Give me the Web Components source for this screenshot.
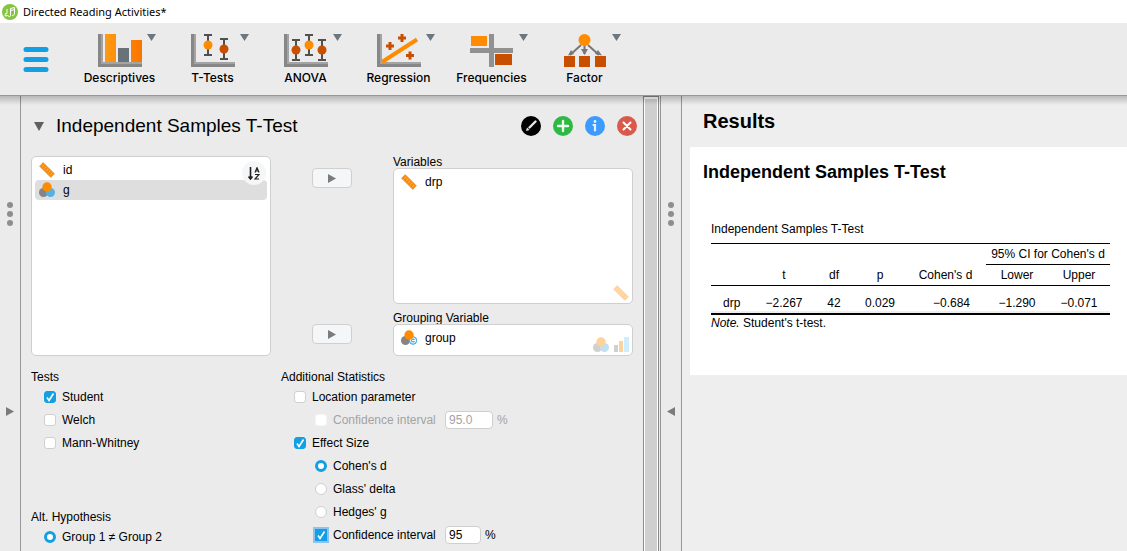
<!DOCTYPE html>
<html lang="en">
<head>
<meta charset="utf-8">
<title>Directed Reading Activities*</title>
<style>
html, body { margin: 0; height: 100%; }
body { font-family: "Liberation Sans", Arial, sans-serif; font-size: 12px; color: #000; background: #ebebeb; }
</style>
</head>
<body>
<stats-app></stats-app>
<script>
const define = (name, html, setup) => customElements.define(name, class extends HTMLElement {
  connectedCallback() {
    if (this.shadowRoot) return;
    this.attachShadow({ mode: 'open' }).innerHTML = typeof html === 'function' ? html(this) : html;
    if (setup) setup(this, this.shadowRoot);
  }
});

const axes = '<path d="M0 0h5v33h-5z" fill="#878787"/><path d="M0 28h44v5H0z" fill="#878787"/><path d="M3 0h2v28h39v2H3z" fill="#a4a4a4"/>';
const bar = (x, y, r, c) => `<path d="M${x - 4} ${y - 10}h8M${x} ${y - 10}v20M${x - 4} ${y + 10}h8" stroke="#505050" stroke-width="2" fill="none"/><circle cx="${x}" cy="${y}" r="${r}" fill="${c}"/>`;
const nominal = extra => `<circle cx="4.5" cy="10.5" r="4.5" fill="#858585"/>${extra}<circle cx="8" cy="5" r="4.7" fill="#ff8c00"/>`;

const ICONS = {
  logo: ['0 0 16 16', '<circle cx="8" cy="8" r="8" fill="#85c441"/><path d="M12.5 3.5l-4 1v7q-.3 1.700-2.200 1.200M12.500 3.500v6.800M5 5v4.500h-1.500l-.5 2.500 3.500-.5M8.500 6.500l4-1M10 12l2.500-1.700" stroke="#fff" fill="none" stroke-width="1"/>'],
  menu: ['0 0 26 26', '<path d="M3 2.500h20M3 12.500h20M3 22.500h20" stroke="#139fe4" stroke-width="5" stroke-linecap="round"/>'],
  descriptives: ['0 0 44 33', axes + '<defs><linearGradient id="g" x2="1"><stop stop-color="#ff9a12"/><stop offset="1" stop-color="#fb7500"/></linearGradient></defs><path d="M7 0h11v28H7zM33 6h11v22H33z" fill="url(#g)"/><path d="M20 14h11v14H20z" fill="#697279"/>'],
  ttests: ['0 0 44 33', axes + bar(17, 11, 4.5, '#ff8c00') + bar(33, 15, 4.5, '#c94f00')],
  anova: ['0 0 44 33', axes + bar(12, 16, 4.5, '#c94f00') + bar(25, 11, 4.5, '#ff8c00') + bar(38, 16, 4.5, '#c94f00')],
  regression: ['0 0 44 33', axes + '<path d="M5 28L40 5.500" stroke="#ff8c00" stroke-width="4"/><path d="M9 12h8M13 8v8M21 4h8M25 0v8M29 21.500h8M33 17.500v8" stroke="#c94f00" stroke-width="3"/>'],
  frequencies: ['0 0 44 33', '<path d="M19 0h5v33h-5zM0 14h43v5H0z" fill="#919191"/><path d="M1 2h16v10H1z" fill="#ff8c00"/><path d="M25 20h17v11H25z" fill="#c94f00"/>'],
  factor: ['0 0 44 33', '<path d="M18 11L7 21M21.500 11v9M25 11l11 10" stroke="#777" stroke-width="2"/><path d="M5 21.500l3-5.500 3 4zM18 15l3.500 6 3.500-6zM32 20l3-4 4 5.500z" fill="#777"/><circle cx="21.500" cy="6" r="6" fill="#ff8c00"/><path d="M1 22h11v11H1zM16 22h11v11H16zM32 22h11v11H32z" fill="#c94f00"/>'],
  scale: ['0 0 16 16', '<path d="M.5 4L4 .5 15.500 12 12 15.500z" fill="#ff8c00"/><path d="M4 .5L15.500 12M.5 4L12 15.500" stroke="#dc9140" fill="none"/><path d="M5 3L3.500 4.500M7 5L5.500 6.500M9 7L7.500 8.500M11 9l-1.500 1.500M13 11l-1.500 1.500" stroke="#ffb76a" fill="none"/>'],
  nominal: ['0 0 16 16', nominal('<circle cx="11.500" cy="10.500" r="4.500" fill="#56b1e0"/>')],
  nominaltext: ['0 0 16 16', nominal('<circle cx="12" cy="10.500" r="4.200" fill="#49aee4"/><circle cx="12" cy="10.500" r="2.600" fill="none" stroke="#fff"/><path d="M11 10.500h4" stroke="#fff"/>')],
  ordinal: ['0 0 16 16', '<path d="M1 8h4v7H1z" fill="#858585"/><path d="M6 4h4v11H6z" fill="#ff8c00"/><path d="M11 0h5v15h-5z" fill="#7cd6ff"/>'],
  edit: ['0 0 20 20', '<circle cx="10" cy="10" r="10" fill="#000"/><path d="M8.500 11.500l6-6" stroke="#e8e8e8" stroke-width="2.400" stroke-linecap="round"/><path d="M5 15l1-3.500 2.500 2.500z" fill="#e8e8e8"/>'],
  add: ['0 0 20 20', '<circle cx="10" cy="10" r="10" fill="#2eb944"/><path d="M5 10h10M10 5v10" stroke="#efe" stroke-width="2.400" stroke-linecap="round"/>'],
  info: ['0 0 20 20', '<circle cx="10" cy="10" r="10" fill="#3d9bff"/><circle cx="10" cy="5.500" r="1.400" fill="#e4f1ff"/><path d="M8.500 9h1.500v5.500" stroke="#e4f1ff" stroke-width="2.200" fill="none" stroke-linecap="round"/>'],
  close: ['0 0 20 20', '<circle cx="10" cy="10" r="10" fill="#d95a4a"/><path d="M6.500 6.500l7 7M13.500 6.500l-7 7" stroke="#fff" stroke-width="2" stroke-linecap="round"/>'],
  right: ['0 0 8 9', '<path d="M0 0l8 4.500L0 9z" fill="#7b7b7b"/>'],
  left: ['0 0 8 9', '<path d="M8 0L0 4.500 8 9z" fill="#7b7b7b"/>'],
  down: ['0 0 10 9', '<path d="M0 0h10L5 9z" fill="#606060"/>'],
  drop: ['0 0 9 7', '<path d="M0 0h9L4.500 7z" fill="#6b7880"/>'],
  grip: ['0 0 6 24', '<g fill="#8e8e8e"><circle cx="3" cy="3" r="3"/><circle cx="3" cy="12" r="3"/><circle cx="3" cy="21" r="3"/></g>'],
  sort: ['0 0 12 13', '<path d="M2.500 0v12M.5 9.500l2 2.500 2-2.500" stroke="#222" stroke-width="1.600" fill="none"/><path d="M7 5.500L9 .7l2 4.800M7.500 4h3M7 7.500h4L7 12h4" stroke="#222" stroke-width="1.200" fill="none"/>']
};

define('app-icon', el => {
  const [box, body] = ICONS[el.getAttribute('name')];
  const [, , w, h] = box.split(' ');
  return `<style>:host{display:block;flex:none;line-height:0}svg{display:block}</style>
  <svg width="${w}" height="${h}" viewBox="${box}" aria-hidden="true">${body}</svg>`;
});

define('title-bar', `<style>
:host{display:flex;align-items:center;gap:5px;height:23px;padding-left:2px;background:#fff;font:11px "Noto Sans","Open Sans",sans-serif}
</style><app-icon name="logo"></app-icon><span><slot></slot></span>`);

define('tool-item', el => `<style>
:host{display:block;width:93px}
button{all:unset;box-sizing:border-box;position:relative;display:flex;flex-direction:column;align-items:center;gap:2px;width:100%;padding-top:11px;font:500 12px/18px Inter,sans-serif;cursor:pointer}
.drop{position:absolute;left:74px;top:11px}
</style><button><app-icon name="${el.getAttribute('icon')}"></app-icon><span><slot></slot></span><app-icon class="drop" name="drop"></app-icon></button>`);

define('tool-bar', `<style>
:host{display:flex;align-items:flex-start;height:72px;background:#ebebeb;border-bottom:1px solid #979797}
.menu{all:unset;padding:24px 24px 0 23px;cursor:pointer}
</style>
<button class="menu" aria-label="Menu"><app-icon name="menu"></app-icon></button>
<slot></slot>`);

define('pane-handle', el => `<style>
:host{display:grid;grid-template-rows:1fr;flex:0 0 20px;border-right:1px solid #979797;background:#ebebeb}
div{display:flex;flex-direction:column;align-items:center;padding-top:106px;gap:181px}
button{all:unset;cursor:pointer}
</style><div><app-icon name="grip"></app-icon><button aria-label="Toggle panel"><app-icon name="${el.getAttribute('arrow')}"></app-icon></button></div>`);

define('var-item', el => `<style>
:host{display:flex;align-items:center;gap:8px;height:20px;padding-left:4px;border-radius:4px}
:host([selected]){background:#dedede}
</style><app-icon name="${el.getAttribute('icon')}"></app-icon><span><slot></slot></span>`);

define('var-list', `<style>
:host{display:block;position:relative;box-sizing:border-box;padding:3px;background:#fff;border:1px solid #cfcfcf;border-radius:5px}
.types{position:absolute;right:3px;bottom:2px;display:flex;gap:4px;opacity:.38}
.corner{position:absolute;right:4px;top:4px}
</style><slot></slot><div class="types"><slot name="types"></slot></div><div class="corner"><slot name="corner"></slot></div>`);

define('move-button', `<style>
:host{display:block}
button{display:flex;align-items:center;justify-content:center;box-sizing:border-box;width:100%;height:20px;padding:0;background:#f5f6f7;border:1px solid #cfcfcf;border-radius:4px}
</style><button aria-label="Move variable"><app-icon name="right"></app-icon></button>`);

define('sort-button', `<style>
:host{display:block}
button{display:flex;align-items:center;justify-content:center;width:24px;height:24px;padding:0;border:0;border-radius:50%;background:#f5f6f7}
</style><button aria-label="Sort variables"><app-icon name="sort"></app-icon></button>`);

define('form-option', el => {
  const has = a => el.hasAttribute(a) ? a : '';
  return `<style>
:host{display:flex;align-items:center;height:23px;padding-left:13px}
:host([nested]){padding-left:34px}
:host([disabled]){color:#a3a3a3}
label{display:flex;align-items:center;gap:6px}
:host([value]) label.opt{width:130px}
input{box-sizing:border-box;margin:0;font:inherit;color:inherit}
.mark{appearance:none;width:12px;height:12px;background:#fff;border:1px solid #cfcfcf;border-radius:3px}
.mark[type=radio]{border-radius:50%}
.mark:disabled{border-color:#f5f5f5}
.mark[type=checkbox]:checked{border-color:#139fe4;background:#139fe4 url("data:image/svg+xml,%3Csvg xmlns='http://www.w3.org/2000/svg' viewBox='0 0 10 10'%3E%3Cpath d='M2 5.500l2 3L8.500 1.500' fill='none' stroke='white' stroke-width='1.600'/%3E%3C/svg%3E")}
.mark[type=radio]:checked{border:3px solid #139fe4}
:host([focused]) .mark{box-shadow:0 0 0 2px #8fc1f3;border-radius:0}
.num{width:36px;height:18px;padding:0 3px;background:#fff;border:1px solid #cfcfcf;border-radius:4px}
:host([wide]) .num{width:48px}
.amount{gap:4px}
</style>
<label class="opt"><input class="mark" type="${el.getAttribute('type')}" ${has('checked')} ${has('disabled')}><span><slot></slot></span></label>
${has('value') ? `<label class="amount"><input class="num" aria-label="Confidence level" value="${el.getAttribute('value')}" ${has('disabled')}><span>%</span></label>` : ''}`;
}, (el, root) => {
  root.querySelector('.mark').addEventListener('change', e => {
    if (e.target.type !== 'radio') return;
    for (const other of el.parentElement.querySelectorAll('form-option[type=radio]'))
      if (other !== el) other.shadowRoot.querySelector('.mark').checked = false;
  });
});

define('option-group', el => `<style>
:host{display:block}
h3{margin:0;font-size:12px;font-weight:400;line-height:16px}
</style><h3>${el.getAttribute('heading')}</h3><slot></slot>`);

define('analysis-form', `<style>
:host{display:block;flex:0 1 622px;box-sizing:border-box;padding:20px 10px 0;overflow:hidden}
header{display:flex;align-items:center;gap:12px;height:20px;margin-right:-4px;padding-left:3px}
h2{flex:1;margin:0;font-size:19px;line-height:20px;font-weight:400}
header button{all:unset;cursor:pointer}
.vars{display:grid;grid-template-columns:1fr 40px 1fr;grid-template-rows:12px 136px 8px 12px 32px;column-gap:41px;margin:20px 0 13px}
.source{grid-area:1/1/6/2}
.m1{grid-area:2/2}.m2{grid-area:5/2}
.l1{grid-area:1/3}.l2{grid-area:4/3}
.v1{grid-area:2/3}.v2{grid-area:5/3}
.l1,.l2{line-height:12px}
.options{display:grid;grid-template-columns:250px 1fr}
.left{display:grid;align-content:start;gap:55px}
</style>
<header><button aria-label="Collapse"><app-icon name="down"></app-icon></button><h2>Independent Samples T-Test</h2>
<button aria-label="Rename"><app-icon name="edit"></app-icon></button><button aria-label="Duplicate"><app-icon name="add"></app-icon></button><button aria-label="Help"><app-icon name="info"></app-icon></button><button aria-label="Remove"><app-icon name="close"></app-icon></button></header>
<div class="vars">
<var-list class="source"><var-item icon="scale">id</var-item><var-item icon="nominal" selected>g</var-item><sort-button slot="corner"></sort-button></var-list>
<move-button class="m1"></move-button><move-button class="m2"></move-button>
<span class="l1">Variables</span>
<var-list class="v1"><var-item icon="scale">drp</var-item><app-icon slot="types" name="scale"></app-icon></var-list>
<span class="l2">Grouping Variable</span>
<var-list class="v2"><var-item icon="nominaltext">group</var-item><app-icon slot="types" name="nominal"></app-icon><app-icon slot="types" name="ordinal"></app-icon></var-list>
</div>
<div class="options">
<div class="left">
<option-group heading="Tests"><form-option type="checkbox" checked>Student</form-option><form-option type="checkbox">Welch</form-option><form-option type="checkbox">Mann-Whitney</form-option></option-group>
<option-group heading="Alt. Hypothesis"><form-option type="radio" checked>Group 1 ≠ Group 2</form-option></option-group>
</div>
<option-group heading="Additional Statistics">
<form-option type="checkbox">Location parameter</form-option>
<form-option type="checkbox" nested disabled wide value="95.0">Confidence interval</form-option>
<form-option type="checkbox" checked>Effect Size</form-option>
<form-option type="radio" nested checked>Cohen's d</form-option>
<form-option type="radio" nested>Glass' delta</form-option>
<form-option type="radio" nested>Hedges' g</form-option>
<form-option type="checkbox" nested checked focused value="95">Confidence interval</form-option>
</option-group>
</div>`);

define('scroll-track', `<style>
:host{display:flex;flex:0 0 18px;box-sizing:border-box;border-right:1px solid #979797}
div{flex:1;box-sizing:border-box;margin-right:1px;border:1px solid #8a8a8a;border-bottom:0;padding:2px 1px 0;background:#fff}
i{display:block;height:100%;background:#cfcfcf}
</style><div><i></i></div>`);

define('results-panel', `<style>
:host{display:block;flex:1;min-width:0;background:#eee;padding:13px 0 0 8px}
h1{margin:0 0 14px 13px;font-size:20px;line-height:24px}
section{background:#fff;padding:13px 13px 44px}
h2{margin:0 0 38px;font-size:18px;line-height:24px}
table{width:399px;margin-left:8px;table-layout:fixed;border-collapse:separate;border-spacing:0;line-height:15px}
caption{text-align:left;padding-bottom:6px}
th,td{padding:0;font-weight:400;text-align:center}
thead th{height:20px}
.top th{border-top:1px solid #000}
.top .ci{border-bottom:1px solid #000}
.sub th{border-bottom:1px solid #000}
tbody td,tbody th{height:16px;padding-top:9px;border-bottom:2px solid #eee}
tbody th{text-align:left;padding-left:12px}
tbody .d{text-align:right;padding-right:16px}
tfoot td{border-top:2px solid #000;text-align:left;height:16px}
</style>
<h1>Results</h1>
<section><h2>Independent Samples T-Test</h2>
<table><caption>Independent Samples T-Test</caption>
<colgroup><col style="width:44px"><col style="width:58px"><col style="width:42px"><col style="width:50px"><col style="width:81px"><col style="width:62px"><col style="width:62px"></colgroup>
<thead><tr class="top"><th colspan="5"></th><th class="ci" colspan="2">95% CI for Cohen's d</th></tr>
<tr class="sub"><th></th><th>t</th><th>df</th><th>p</th><th>Cohen's d</th><th>Lower</th><th>Upper</th></tr></thead>
<tbody><tr><th>drp</th><td>−2.267</td><td>42</td><td>0.029</td><td class="d">−0.684</td><td>−1.290</td><td>−0.071</td></tr></tbody>
<tfoot><tr><td colspan="7"><i>Note.</i> Student's t-test.</td></tr></tfoot>
</table></section>`);

define('stats-app', `<style>
:host{display:flex;flex-direction:column;height:100%;overflow:hidden}
main{position:relative;display:flex;flex:1;min-height:0}
main::before{content:"";position:absolute;z-index:1;inset:0 0 auto;height:9px;background:linear-gradient(rgba(0,0,0,.22),transparent);pointer-events:none}
</style>
<title-bar>Directed Reading Activities*</title-bar>
<tool-bar>
<tool-item icon="descriptives">Descriptives</tool-item><tool-item icon="ttests">T-Tests</tool-item><tool-item icon="anova">ANOVA</tool-item><tool-item icon="regression">Regression</tool-item><tool-item icon="frequencies">Frequencies</tool-item><tool-item icon="factor">Factor</tool-item>
</tool-bar>
<main><pane-handle arrow="right"></pane-handle><analysis-form></analysis-form><scroll-track></scroll-track><pane-handle arrow="left"></pane-handle><results-panel></results-panel></main>`);
</script>
</body>
</html>
